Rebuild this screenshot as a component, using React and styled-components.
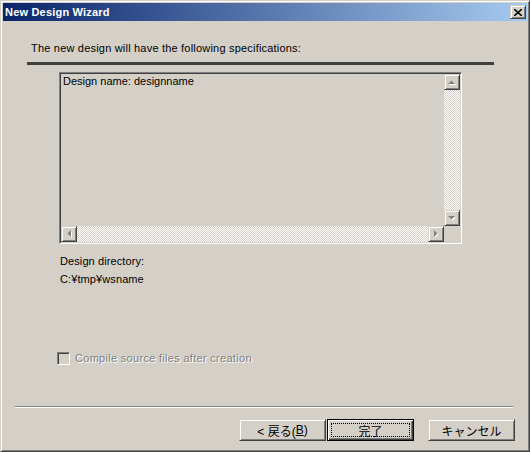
import React from 'react';
import styled, {createGlobalStyle, css} from 'styled-components';

const FACE = '#d4d0c8';
const SHADOW = '#808080';
const DARK = '#404040';
const UI_FONT = `'Liberation Sans', Arial, sans-serif`;
const JP_FONT = `'Liberation Sans', 'Noto Sans CJK JP', sans-serif`;

const GlobalStyle = createGlobalStyle`
  html, body {
    margin: 0;
    padding: 0;
    background: ${FACE};
  }
  * {
    box-sizing: border-box;
  }
`;

const raised = css`
  border: 1px solid;
  border-color: ${FACE} ${DARK} ${DARK} ${FACE};
  box-shadow: inset 1px 1px #fff, inset -1px -1px ${SHADOW};
`;

const sunken = css`
  border: 1px solid;
  border-color: ${SHADOW} #fff #fff ${SHADOW};
  box-shadow: inset 1px 1px ${DARK}, inset -1px -1px ${FACE};
`;

const checker = css`
  background-color: ${FACE};
  background-image: conic-gradient(#fff 25%, ${FACE} 0 50%, #fff 0 75%, ${FACE} 0);
  background-size: 2px 2px;
`;

function Arrow({dir}) {
  const shapes = {
    up: '0,4 7,4 3.5,0.5',
    down: '0,0 7,0 3.5,3.5',
    left: '4,0 4,7 0.5,3.5',
    right: '0,0 0,7 3.5,3.5',
  };
  const vertical = dir === 'up' || dir === 'down';
  const w = vertical ? 8 : 5;
  const h = vertical ? 5 : 8;
  return (
    <svg width={w} height={h} viewBox={`0 0 ${w} ${h}`}>
      <polygon points={shapes[dir]} fill="#fff" transform="translate(1 1)" />
      <polygon points={shapes[dir]} fill={SHADOW} />
    </svg>
  );
}

export default function App() {
  return (
    <>
      <GlobalStyle />
      <Window>
        <TitleBar>
          <Title>New Design Wizard</Title>
          <CloseButton>
            <svg width="8" height="7" viewBox="0 0 8 7">
              <path d="M0 0 L8 7 M8 0 L0 7" stroke="#000" strokeWidth="1.6" />
            </svg>
          </CloseButton>
        </TitleBar>
        <Body>
          <Heading>The new design will have the following specifications:</Heading>
          <HeavyRule />
          <ListBox>
            <ListText>Design name: designname</ListText>
            <VScroll>
              <ScrollButton>
                <Arrow dir="up" />
              </ScrollButton>
              <Track />
              <ScrollButton>
                <Arrow dir="down" />
              </ScrollButton>
            </VScroll>
            <HScroll>
              <ScrollButton>
                <Arrow dir="left" />
              </ScrollButton>
              <Track />
              <ScrollButton>
                <Arrow dir="right" />
              </ScrollButton>
            </HScroll>
          </ListBox>
          <Label $top={11}>Design directory:</Label>
          <Label $top={5}>C:¥tmp¥wsname</Label>
          <CheckRow>
            <CheckBox />
            <DisabledText>Compile source files after creation</DisabledText>
          </CheckRow>
          <EtchedRule />
          <ButtonRow>
            <PushButton>
              &lt; 戻る(<u>B</u>)
            </PushButton>
            <PushButton $default>
              <FocusRing>完了</FocusRing>
            </PushButton>
            <PushButton $gap>キャンセル</PushButton>
          </ButtonRow>
        </Body>
      </Window>
    </>
  );
}

const Window = styled.div`
  width: 530px;
  height: 452px;
  display: flex;
  flex-direction: column;
  background: ${FACE};
  border: 1px solid;
  border-color: ${FACE} ${DARK} ${DARK} ${FACE};
  box-shadow: inset 1px 1px #fff, inset -1px -1px ${SHADOW};
  padding: 2px;
  font-family: ${UI_FONT};
  font-size: 11px;
  color: #000;
`;

const TitleBar = styled.div`
  height: 18px;
  display: flex;
  align-items: center;
  justify-content: space-between;
  padding: 0 1px 0 2px;
  background: linear-gradient(to right, #0a246a, #a6caf0);
`;

const Title = styled.span`
  color: #fff;
  font-weight: bold;
  font-size: 11px;
  letter-spacing: 0.2px;
`;

const CloseButton = styled.div`
  width: 16px;
  height: 14px;
  display: flex;
  align-items: center;
  justify-content: center;
  background: ${FACE};
  ${raised};
`;

const Body = styled.div`
  flex: 1;
  display: flex;
  flex-direction: column;
`;

const Heading = styled.div`
  margin: 21px 0 0 28px;
  line-height: 13px;
  letter-spacing: 0.2px;
`;

const HeavyRule = styled.div`
  margin: 7px 0 0 24px;
  width: 467px;
  height: 3px;
  background: ${DARK};
`;

const ListBox = styled.div`
  margin: 7px 0 0 56px;
  width: 403px;
  height: 172px;
  display: grid;
  grid-template-columns: 1fr 16px;
  grid-template-rows: 1fr 16px;
  background: ${FACE};
  ${sunken};
  padding: 1px;
`;

const ListText = styled.div`
  padding: 1px 0 0 2px;
  line-height: 13px;
`;

const VScroll = styled.div`
  display: flex;
  flex-direction: column;
`;

const HScroll = styled.div`
  display: flex;
`;

const Track = styled.div`
  flex: 1;
  ${checker};
`;

const ScrollButton = styled.div`
  width: 16px;
  height: 16px;
  flex: none;
  display: flex;
  align-items: center;
  justify-content: center;
  background: ${FACE};
  ${raised};
`;

const Label = styled.div`
  margin: ${(p) => p.$top}px 0 0 57px;
  line-height: 13px;
  letter-spacing: 0.1px;
`;

const CheckRow = styled.div`
  margin: 66px 0 0 54px;
  display: flex;
  align-items: center;
  gap: 5px;
`;

const CheckBox = styled.div`
  width: 13px;
  height: 13px;
  background: ${FACE};
  ${sunken};
`;

const DisabledText = styled.span`
  color: ${SHADOW};
  text-shadow: 1px 1px #fff;
  line-height: 13px;
  letter-spacing: 0.3px;
`;

const EtchedRule = styled.div`
  margin: 41px 0 0 12px;
  width: 498px;
  height: 2px;
  border-top: 1px solid ${SHADOW};
  border-bottom: 1px solid #fff;
`;

const ButtonRow = styled.div`
  margin-top: 11px;
  padding-right: 12px;
  display: flex;
  justify-content: flex-end;
  gap: 1px;
`;

const PushButton = styled.div`
  width: 87px;
  height: 22px;
  display: flex;
  align-items: center;
  justify-content: center;
  font-family: ${JP_FONT};
  font-size: 12px;
  background: ${FACE};
  margin-left: ${(p) => (p.$gap ? '13px' : '0')};
  ${(p) =>
    p.$default
      ? css`
          border: 1px solid #000;
          box-shadow: inset 1px 1px #fff, inset -1px -1px ${DARK},
            inset -2px -2px ${SHADOW};
          padding: 3px;
        `
      : raised};

  u {
    text-decoration: underline;
  }
`;

const FocusRing = styled.div`
  width: 100%;
  height: 100%;
  display: flex;
  align-items: center;
  justify-content: center;
  border: 1px dotted #000;
`;
